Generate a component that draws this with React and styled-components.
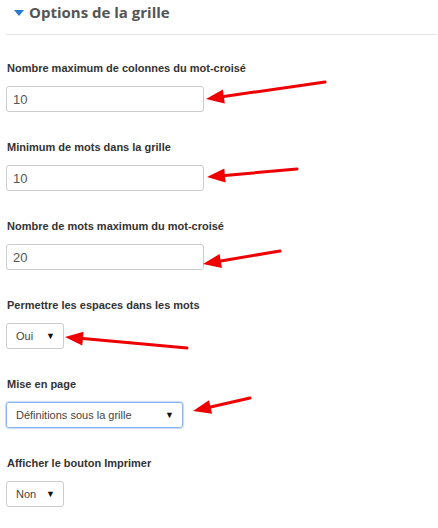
import React from 'react';
import styled, { createGlobalStyle } from 'styled-components';

const GlobalStyle = createGlobalStyle`
    body {
        margin: 0;
        background: #fff;
        font-family: 'Liberation Sans', Arial, sans-serif;
    }
`;

const Page = styled.div`
    position: relative;
    width: 438px;
    height: 528px;
    overflow: hidden;
    padding: 0 1px 0 6px;
    box-sizing: border-box;
`;

const Header = styled.div`
    display: flex;
    align-items: center;
    gap: 5px;
    height: 35px;
    box-sizing: border-box;
    padding: 0 0 10px 8px;
    border-bottom: 1px solid #e3e3e3;
`;

const Caret = styled.span`
    width: 0;
    height: 0;
    border-left: 5px solid transparent;
    border-right: 5px solid transparent;
    border-top: 6px solid #2a7bd0;
    margin-top: 2px;
`;

const Title = styled.h2`
    margin: 0;
    font-family: 'Open Sans', sans-serif;
    font-size: 15px;
    font-weight: 700;
    line-height: 24px;
    color: #555;
`;

const Fields = styled.div`
    display: flex;
    flex-direction: column;
    gap: 28px;
    padding-top: 26px;
`;

const Field = styled.div`
    display: flex;
    flex-direction: column;
    align-items: flex-start;
    gap: 10px;
`;

const Label = styled.label`
    font-size: 11px;
    font-weight: 700;
    line-height: 15px;
    color: #333;
    padding-left: 1px;
`;

const TextInput = styled.div`
    width: 198px;
    height: 26px;
    box-sizing: border-box;
    border: 1px solid #ccc;
    border-radius: 3px;
    padding: 0 6px;
    display: flex;
    align-items: center;
    font-size: 13px;
    color: #555;
`;

const Select = styled.div`
    width: ${(p) => p.$width}px;
    height: 26px;
    box-sizing: border-box;
    border: 1px solid ${(p) => (p.$focused ? '#8ab4f0' : '#ccc')};
    box-shadow: ${(p) => (p.$focused ? '0 0 1px 1px rgba(102,153,230,0.35)' : 'none')};
    border-radius: 3px;
    padding: 0 8px 0 9px;
    display: flex;
    align-items: center;
    justify-content: space-between;
    font-size: 11px;
    color: #444;
`;

const SelectArrow = styled.span`
    font-size: 9px;
    color: #111;
`;

const Annotations = styled.svg`
    position: absolute;
    left: 0;
    top: 0;
    pointer-events: none;
`;

const fields = [
    { label: 'Nombre maximum de colonnes du mot-croisé', type: 'input', value: '10' },
    { label: 'Minimum de mots dans la grille', type: 'input', value: '10' },
    { label: 'Nombre de mots maximum du mot-croisé', type: 'input', value: '20' },
    { label: 'Permettre les espaces dans les mots', type: 'select', value: 'Oui', width: 58 },
    { label: 'Mise en page', type: 'select', value: 'Définitions sous la grille', width: 177, focused: true },
    { label: 'Afficher le bouton Imprimer', type: 'select', value: 'Non', width: 58 },
];

// tail -> tip
const arrows = [
    [325, 82, 206, 99],
    [297, 169, 207, 177],
    [280, 251, 203, 264],
    [187, 348, 65, 337],
    [250, 398, 193, 411],
];

const Arrow = ({ x1, y1, x2, y2 }) => {
    const a = Math.atan2(y2 - y1, x2 - x1);
    const len = 18;
    const half = 7;
    const bx = x2 - Math.cos(a) * len;
    const by = y2 - Math.sin(a) * len;
    const px = -Math.sin(a) * half;
    const py = Math.cos(a) * half;
    return (
        <g>
            <line x1={x1} y1={y1} x2={bx} y2={by} stroke="#ee0000" strokeWidth="3" strokeLinecap="round" />
            <polygon points={`${x2},${y2} ${bx + px},${by + py} ${bx - px},${by - py}`} fill="#ee0000" />
        </g>
    );
};

const App = () => {
    return (
        <>
            <GlobalStyle />
            <Page>
                <Header>
                    <Caret />
                    <Title>Options de la grille</Title>
                </Header>
                <Fields>
                    {fields.map((f) => (
                        <Field key={f.label}>
                            <Label>{f.label}</Label>
                            {f.type === 'input' ? (
                                <TextInput>{f.value}</TextInput>
                            ) : (
                                <Select $width={f.width} $focused={f.focused}>
                                    <span>{f.value}</span>
                                    <SelectArrow>▼</SelectArrow>
                                </Select>
                            )}
                        </Field>
                    ))}
                </Fields>
                <Annotations width="438" height="528" viewBox="0 0 438 528">
                    {arrows.map(([x1, y1, x2, y2], i) => (
                        <Arrow key={i} x1={x1} y1={y1} x2={x2} y2={y2} />
                    ))}
                </Annotations>
            </Page>
        </>
    );
};

export default App;
